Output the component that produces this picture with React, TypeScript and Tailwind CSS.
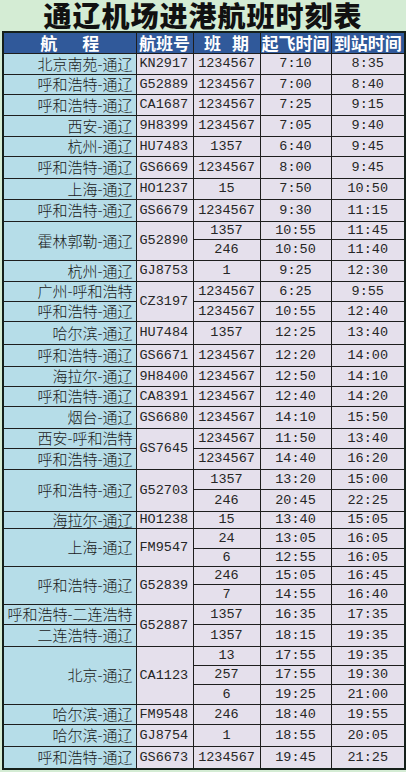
import React from "react";

type Row = {
  h: number;
  route?: string;
  routeSpan?: number;
  flight?: string;
  flightSpan?: number;
  days: string;
  dep: string;
  arr: string;
};

const ROWS: Row[] = [
  { h: 21, route: "北京南苑-通辽", flight: "KN2917", days: "1234567", dep: "7:10", arr: "8:35" },
  { h: 20, route: "呼和浩特-通辽", flight: "G52889", days: "1234567", dep: "7:00", arr: "8:40" },
  { h: 21, route: "呼和浩特-通辽", flight: "CA1687", days: "1234567", dep: "7:25", arr: "9:15" },
  { h: 21, route: "西安-通辽", flight: "9H8399", days: "1234567", dep: "7:05", arr: "9:40" },
  { h: 20, route: "杭州-通辽", flight: "HU7483", days: "1357", dep: "6:40", arr: "9:45" },
  { h: 22, route: "呼和浩特-通辽", flight: "GS6669", days: "1234567", dep: "8:00", arr: "9:45" },
  { h: 21, route: "上海-通辽", flight: "HO1237", days: "15", dep: "7:50", arr: "10:50" },
  { h: 22, route: "呼和浩特-通辽", flight: "GS6679", days: "1234567", dep: "9:30", arr: "11:15" },
  { h: 18, route: "霍林郭勒-通辽", routeSpan: 2, flight: "G52890", flightSpan: 2, days: "1357", dep: "10:55", arr: "11:45" },
  { h: 21, days: "246", dep: "10:50", arr: "11:40" },
  { h: 21, route: "杭州-通辽", flight: "GJ8753", days: "1", dep: "9:25", arr: "12:30" },
  { h: 20, route: "广州-呼和浩特", flight: "CZ3197", flightSpan: 2, days: "1234567", dep: "6:25", arr: "9:55" },
  { h: 20, route: "呼和浩特-通辽", days: "1234567", dep: "10:55", arr: "12:40" },
  { h: 23, route: "哈尔滨-通辽", flight: "HU7484", days: "1357", dep: "12:25", arr: "13:40" },
  { h: 22, route: "呼和浩特-通辽", flight: "GS6671", days: "1234567", dep: "12:20", arr: "14:00" },
  { h: 20, route: "海拉尔-通辽", flight: "9H8400", days: "1234567", dep: "12:50", arr: "14:10" },
  { h: 20, route: "呼和浩特-通辽", flight: "CA8391", days: "1234567", dep: "12:40", arr: "14:20" },
  { h: 22, route: "烟台-通辽", flight: "GS6680", days: "1234567", dep: "14:10", arr: "15:50" },
  { h: 20, route: "西安-呼和浩特", flight: "GS7645", flightSpan: 2, days: "1234567", dep: "11:50", arr: "13:40" },
  { h: 21, route: "呼和浩特-通辽", days: "1234567", dep: "14:40", arr: "16:20" },
  { h: 20, route: "呼和浩特-通辽", routeSpan: 2, flight: "G52703", flightSpan: 2, days: "1357", dep: "13:20", arr: "15:00" },
  { h: 22, days: "246", dep: "20:45", arr: "22:25" },
  { h: 17, route: "海拉尔-通辽", flight: "HO1238", days: "15", dep: "13:40", arr: "15:05" },
  { h: 20, route: "上海-通辽", routeSpan: 2, flight: "FM9547", flightSpan: 2, days: "24", dep: "13:05", arr: "16:05" },
  { h: 18, days: "6", dep: "12:55", arr: "16:05" },
  { h: 18, route: "呼和浩特-通辽", routeSpan: 2, flight: "G52839", flightSpan: 2, days: "246", dep: "15:05", arr: "16:45" },
  { h: 20, days: "7", dep: "14:55", arr: "16:40" },
  { h: 20, route: "呼和浩特-二连浩特", flight: "G52887", flightSpan: 2, days: "1357", dep: "16:35", arr: "17:35" },
  { h: 22, route: "二连浩特-通辽", days: "1357", dep: "18:15", arr: "19:35" },
  { h: 19, route: "北京-通辽", routeSpan: 3, flight: "CA1123", flightSpan: 3, days: "13", dep: "17:55", arr: "19:35" },
  { h: 19, days: "257", dep: "17:55", arr: "19:30" },
  { h: 20, days: "6", dep: "19:25", arr: "21:00" },
  { h: 20, route: "哈尔滨-通辽", flight: "FM9548", days: "246", dep: "18:40", arr: "19:55" },
  { h: 22, route: "哈尔滨-通辽", flight: "GJ8754", days: "1", dep: "18:55", arr: "20:05" },
  { h: 23, route: "呼和浩特-通辽", flight: "GS6673", days: "1234567", dep: "19:45", arr: "21:25" },
];

const cell = "border border-[#1e1e1e] p-0 align-middle";
const num = "font-['Liberation_Mono','Noto_Sans_CJK_SC',monospace] text-[13.5px] text-[#262626] text-center leading-[15px]";

export default function App() {
  return (
    <div className="w-[406px] h-[772px] bg-[#d4ecd4] overflow-hidden font-['Noto_Sans_CJK_SC',sans-serif]">
      <div className="h-[31px] flex items-center justify-center">
        <h1 className="text-[28px] leading-[31px] font-black text-[#111] tracking-[1px]">
          通辽机场进港航班时刻表
        </h1>
      </div>

      <table className="ml-[2px] w-[402px] table-fixed border-collapse border-2 border-[#15201a]">
        <colgroup>
          <col className="w-[133px]" />
          <col className="w-[57px]" />
          <col className="w-[67px]" />
          <col className="w-[71px]" />
          <col className="w-[74px]" />
        </colgroup>
        <thead>
          <tr className="h-[21px] bg-[#30599a] text-white text-[17px] font-bold leading-[18px]">
            <th className={cell}>
              <div className="flex justify-center gap-[25px]">
                <span>航</span>
                <span>程</span>
              </div>
            </th>
            <th className={cell}>航班号</th>
            <th className={cell}>
              <div className="flex justify-center gap-[11px]">
                <span>班</span>
                <span>期</span>
              </div>
            </th>
            <th className={cell}>起飞时间</th>
            <th className={cell}>到站时间</th>
          </tr>
        </thead>
        <tbody>
          {ROWS.map((r, i) => (
            <tr key={i} style={{ height: r.h }}>
              {r.route && (
                <td
                  rowSpan={r.routeSpan ?? 1}
                  className={`${cell} bg-[#b6dde8] text-right pr-[3px] text-[15px] font-light leading-[16px] text-[#1a1a1a] whitespace-nowrap`}
                >
                  {r.route}
                </td>
              )}
              {r.flight && (
                <td
                  rowSpan={r.flightSpan ?? 1}
                  className={`${cell} bg-[#e5e0ec] pl-[3px] font-['Liberation_Mono',monospace] text-[13.5px] leading-[15px] text-[#262626]`}
                >
                  {r.flight}
                </td>
              )}
              <td className={`${cell} bg-[#e5e0ec] ${num}`}>{r.days}</td>
              <td className={`${cell} bg-[#e5e0ec] ${num}`}>{r.dep}</td>
              <td className={`${cell} bg-[#e5e0ec] ${num}`}>{r.arr}</td>
            </tr>
          ))}
        </tbody>
      </table>
    </div>
  );
}
